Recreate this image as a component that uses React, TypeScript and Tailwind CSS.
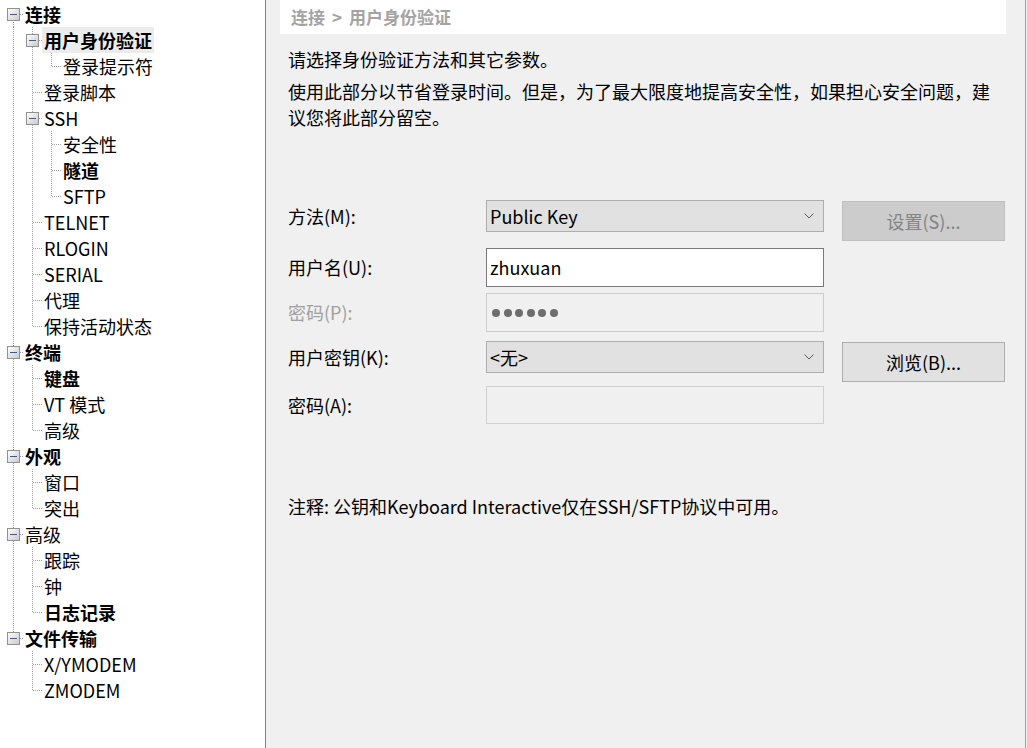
import React from "react";

type Node = {
  label: string;
  bold?: boolean;
  selected?: boolean;
  children?: Node[];
};

const tree: Node[] = [
  {
    label: "连接",
    bold: true,
    children: [
      { label: "用户身份验证", bold: true, selected: true, children: [{ label: "登录提示符" }] },
      { label: "登录脚本" },
      {
        label: "SSH",
        children: [{ label: "安全性" }, { label: "隧道", bold: true }, { label: "SFTP" }],
      },
      { label: "TELNET" },
      { label: "RLOGIN" },
      { label: "SERIAL" },
      { label: "代理" },
      { label: "保持活动状态" },
    ],
  },
  {
    label: "终端",
    bold: true,
    children: [{ label: "键盘", bold: true }, { label: "VT 模式" }, { label: "高级" }],
  },
  { label: "外观", bold: true, children: [{ label: "窗口" }, { label: "突出" }] },
  {
    label: "高级",
    children: [{ label: "跟踪" }, { label: "钟" }, { label: "日志记录", bold: true }],
  },
  { label: "文件传输", bold: true, children: [{ label: "X/YMODEM" }, { label: "ZMODEM" }] },
];

type Row = {
  node: Node;
  guides: boolean[];
  isLast: boolean;
  isFirstRoot: boolean;
};

function flatten(nodes: Node[], guides: boolean[], out: Row[]) {
  nodes.forEach((node, i) => {
    const isLast = i === nodes.length - 1;
    out.push({ node, guides, isLast, isFirstRoot: guides.length === 0 && i === 0 });
    if (node.children) flatten(node.children, [...guides, !isLast], out);
  });
  return out;
}

const rows = flatten(tree, [], []);

const dot = "#a0a0a0";

function Guide({ on }: { on: boolean }) {
  return (
    <svg width="19" height="26" className="shrink-0" shapeRendering="crispEdges">
      {on && <line x1="9.5" y1="0" x2="9.5" y2="26" stroke={dot} strokeDasharray="1 1" />}
    </svg>
  );
}

function Connector({ row }: { row: Row }) {
  const hasKids = !!row.node.children;
  const top = row.isFirstRoot ? 13 : 0;
  const bottom = row.isLast ? 13 : 26;
  return (
    <svg width="19" height="26" className="shrink-0" shapeRendering="crispEdges">
      <line x1="9.5" y1={top} x2="9.5" y2={bottom} stroke={dot} strokeDasharray="1 1" />
      <line x1="10" y1="13.5" x2="19" y2="13.5" stroke={dot} strokeDasharray="1 1" />
      {hasKids && (
        <>
          <defs>
            <linearGradient id="exp" x1="0" y1="0" x2="1" y2="1">
              <stop offset="0" stopColor="#ffffff" />
              <stop offset="1" stopColor="#c9c9c9" />
            </linearGradient>
          </defs>
          <rect x="3.5" y="7.5" width="12" height="12" fill="url(#exp)" stroke="#919191" />
          <line x1="6" y1="13.5" x2="13" y2="13.5" stroke="#3c5a96" strokeWidth="1" />
        </>
      )}
    </svg>
  );
}

function Chevron() {
  return (
    <svg width="10" height="6" viewBox="0 0 10 6" className="shrink-0">
      <path d="M0.5 0.5 L5 5 L9.5 0.5" fill="none" stroke="#5a5a5a" strokeWidth="1" />
    </svg>
  );
}

export default function App() {
  return (
    <div
      className="flex h-[748px] w-[1027px] overflow-hidden bg-white text-black"
      style={{ fontFamily: "'Noto Sans CJK SC', 'Noto Sans', sans-serif" }}
    >
      {/* Tree */}
      <div className="w-[265px] shrink-0 bg-white pt-[1px] pl-[4px] text-[18px]">
        {rows.map((row, i) => (
          <div key={i} className="flex h-[26px] items-center">
            {row.guides.map((g, j) => (
              <Guide key={j} on={g} />
            ))}
            <Connector row={row} />
            <span
              className={`whitespace-nowrap px-[2px] leading-[26px] ${row.node.bold ? "font-bold" : ""} ${
                row.node.selected ? "bg-[#ececec]" : ""
              }`}
            >
              {row.node.label}
            </span>
          </div>
        ))}
      </div>

      {/* Settings panel */}
      <div className="flex flex-1 border-l border-[#7f7f7f] bg-[#f0f0f0]">
        <div className="flex-1">
          <div className="ml-[14px] flex h-[34px] w-[726px] items-center bg-white pl-[11px] text-[17px] font-bold text-[#a3a3a3]">
            连接<span className="px-[7px]">&gt;</span>用户身份验证
          </div>

          <div className="pl-[22px] text-[18px]">
            <p className="mt-[12px] leading-[26px]">请选择身份验证方法和其它参数。</p>
            <p className="mt-[6px] w-[712px] leading-[26px]">
              使用此部分以节省登录时间。但是，为了最大限度地提高安全性，如果担心安全问题，建议您将此部分留空。
            </p>

            <div className="mt-[70px]">
              {/* 方法 */}
              <div className="flex h-[48px] items-start">
                <div className="flex h-[32px] w-[198px] items-center">方法(M):</div>
                <div className="flex h-[32px] w-[338px] items-center justify-between border border-[#adadad] bg-[#e1e1e1] pl-[3px] pr-[9px]">
                  <span>Public Key</span>
                  <Chevron />
                </div>
                <div className="ml-[18px] mt-[1px] flex h-[40px] w-[163px] items-center justify-center border border-[#bfbfbf] bg-[#cccccc] text-[#838383]">
                  设置(S)...
                </div>
              </div>

              {/* 用户名 */}
              <div className="flex h-[45px] items-start">
                <div className="flex h-[39px] w-[198px] items-center">用户名(U):</div>
                <div className="flex h-[39px] w-[338px] items-center border border-[#7a7a7a] bg-white pl-[3px]">
                  zhuxuan
                </div>
              </div>

              {/* 密码 (disabled) */}
              <div className="flex h-[48px] items-start">
                <div className="flex h-[39px] w-[198px] items-center text-[#a0a0a0]">密码(P):</div>
                <div className="flex h-[39px] w-[338px] items-center gap-[3.5px] border border-[#cccccc] bg-[#f0f0f0] pl-[5px]">
                  {[0, 1, 2, 3, 4, 5].map((d) => (
                    <div key={d} className="h-[8px] w-[8px] rounded-full bg-[#6d6d6d]" />
                  ))}
                </div>
              </div>

              {/* 用户密钥 */}
              <div className="flex h-[45px] items-start">
                <div className="flex h-[32px] w-[198px] items-center">用户密钥(K):</div>
                <div className="flex h-[32px] w-[338px] items-center justify-between border border-[#adadad] bg-[#e1e1e1] pl-[3px] pr-[9px]">
                  <span>&lt;无&gt;</span>
                  <Chevron />
                </div>
                <div className="ml-[18px] mt-[1px] flex h-[40px] w-[163px] items-center justify-center border border-[#adadad] bg-[#e1e1e1]">
                  浏览(B)...
                </div>
              </div>

              {/* 密码 */}
              <div className="flex h-[38px] items-start">
                <div className="flex h-[38px] w-[198px] items-center">密码(A):</div>
                <div className="h-[38px] w-[338px] border border-[#d0d0d0] bg-[#f0f0f0]" />
              </div>
            </div>

            <p className="mt-[69px] leading-[26px]">
              注释: 公钥和Keyboard Interactive仅在SSH/SFTP协议中可用。
            </p>
          </div>
        </div>
        <div className="mr-[1px] w-[1px] bg-[#a0a0a0]" />
      </div>
    </div>
  );
}
